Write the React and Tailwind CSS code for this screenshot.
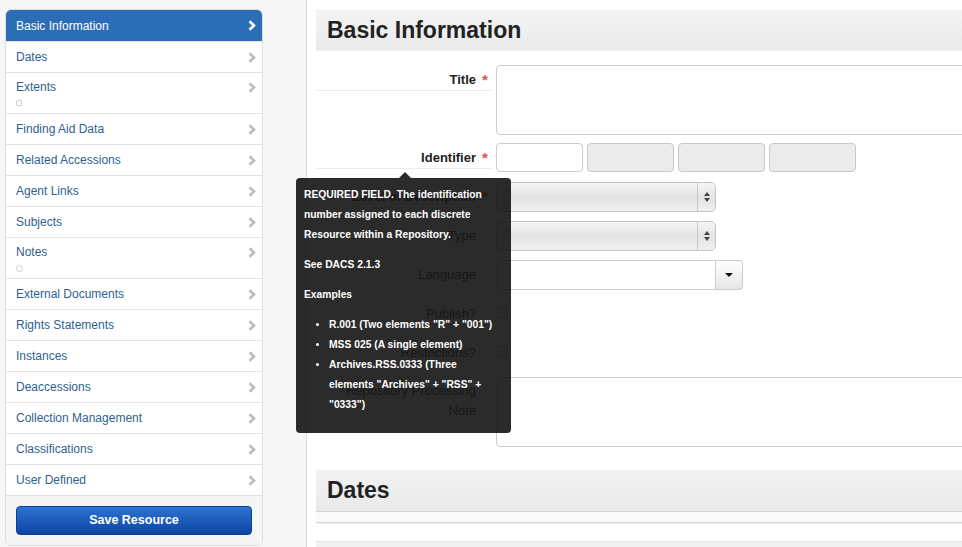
import React from "react";

const items = [
  { label: "Basic Information", active: true },
  { label: "Dates" },
  { label: "Extents", icon: "square" },
  { label: "Finding Aid Data" },
  { label: "Related Accessions" },
  { label: "Agent Links" },
  { label: "Subjects" },
  { label: "Notes", icon: "circle" },
  { label: "External Documents" },
  { label: "Rights Statements" },
  { label: "Instances" },
  { label: "Deaccessions" },
  { label: "Collection Management" },
  { label: "Classifications" },
  { label: "User Defined" },
];

function Chevron({ color }) {
  return (
    <svg width="8" height="11" viewBox="0 0 8 11" className="shrink-0">
      <path d="M1.5 1.2 L6 5.5 L1.5 9.8" fill="none" stroke={color} strokeWidth="2.6" strokeLinejoin="miter" />
    </svg>
  );
}

function Label({ text, required, bold }) {
  return (
    <div className="w-[176px] shrink-0 flex items-start border-b border-[#ececec] h-fit pt-[5px] pb-0">
      <div
        className={
          "w-[160px] text-right text-[13px] leading-[20px] " +
          (bold ? "font-bold text-[#222]" : "font-normal text-[#333]")
        }
      >
        {text}
      </div>
      {required && (
        <span className="ml-[6px] text-[#d9534f] text-[15px] leading-[20px] font-bold">*</span>
      )}
    </div>
  );
}

function SelectBox() {
  return (
    <div className="ml-[4px] w-[220px] h-[30px] rounded-[5px] border border-[#c4c4c4] bg-gradient-to-b from-[#f6f6f6] via-[#e3e3e3] to-[#f0f0f0] flex justify-end">
      <div className="w-[18px] border-l border-[#c8c8c8] flex flex-col items-center justify-center gap-[2px]">
        <span className="w-0 h-0 border-l-[3px] border-r-[3px] border-b-[4px] border-l-transparent border-r-transparent border-b-[#444]" />
        <span className="w-0 h-0 border-l-[3px] border-r-[3px] border-t-[4px] border-l-transparent border-r-transparent border-t-[#444]" />
      </div>
    </div>
  );
}

export default function App() {
  return (
    <div
      className="w-[962px] h-[547px] overflow-hidden flex bg-white"
      style={{ fontFamily: '"Liberation Sans", Arial, Helvetica, sans-serif' }}
    >
      {/* Left column */}
      <div className="w-[307px] shrink-0 bg-[#f6f6f6] border-r border-[#dcdcdc] pt-[9px] pl-[5px]">
        <div className="w-[258px] rounded-[6px] border border-[#dedede] bg-white overflow-hidden">
          {items.map((it, i) => (
            <div
              key={it.label}
              className={
                "flex justify-between pl-[10px] pr-[6px] " +
                (i > 0 ? "border-t border-[#e3e3e3] " : "") +
                (it.active ? "bg-[#2b6db7] h-[31px] items-center" : it.icon ? "h-[41px] pt-[6px] items-start" : "h-[31px] items-center")
              }
            >
              <div className="flex flex-col">
                <span
                  className={
                    "text-[12px] leading-[16px] " + (it.active ? "text-white" : "text-[#2f5f90]")
                  }
                >
                  {it.label}
                </span>
                {it.icon === "square" && (
                  <span className="mt-[5px] w-[6px] h-[6px] rounded-[1px] border border-[#d0d0d0]" />
                )}
                {it.icon === "circle" && (
                  <span className="mt-[5px] w-[7px] h-[7px] rounded-full border border-[#d0d0d0]" />
                )}
              </div>
              <div className={it.icon ? "pt-[3px]" : ""}>
                <Chevron color={it.active ? "#ffffff" : "#bcbcbc"} />
              </div>
            </div>
          ))}
          <div className="border-t border-[#e0e0e0] bg-[#f5f5f5] px-[10px] pt-[10px] pb-[10px]">
            <button className="w-full h-[29px] rounded-[4px] border border-[#0b3f96] bg-gradient-to-b from-[#2e73d3] to-[#0b45a3] text-white text-[12.5px] font-bold">
              Save Resource
            </button>
          </div>
        </div>
      </div>

      {/* Main */}
      <div className="w-[680px] shrink-0 pl-[9px] pt-[10px] relative">
        <div className="h-[41px] bg-gradient-to-b from-[#f4f4f4] to-[#e9e9e9] border-t border-[#f0f0f0] border-b border-[#d3d3d3] flex items-center pl-[11px]">
          <h2 className="text-[23px] font-bold text-[#222] leading-none">Basic Information</h2>
        </div>

        {/* Title */}
        <div className="flex mt-[14px]">
          <Label text="Title" required bold />
          <div className="ml-[4px] flex-1 h-[70px] border border-[#cccccc] rounded-[4px] bg-white" />
        </div>

        {/* Identifier */}
        <div className="flex mt-[8px]">
          <Label text="Identifier" required bold />
          <div className="ml-[4px] flex gap-[4px]">
            <div className="w-[87px] h-[29px] border border-[#cccccc] rounded-[4px] bg-white" />
            <div className="w-[87px] h-[29px] border border-[#c8c8c8] rounded-[4px] bg-[#ebebeb]" />
            <div className="w-[87px] h-[29px] border border-[#c8c8c8] rounded-[4px] bg-[#ebebeb]" />
            <div className="w-[87px] h-[29px] border border-[#c8c8c8] rounded-[4px] bg-[#ebebeb]" />
          </div>
        </div>

        {/* Level of Description */}
        <div className="flex mt-[10px]">
          <Label text="Level of Description" required bold />
          <SelectBox />
        </div>

        {/* Type */}
        <div className="flex mt-[9px]">
          <Label text="Type" />
          <SelectBox />
        </div>

        {/* Language */}
        <div className="flex mt-[9px]">
          <Label text="Language" />
          <div className="ml-[4px] flex h-[30px]">
            <div className="w-[220px] h-full border border-[#cccccc] rounded-l-[4px] bg-white" />
            <div className="w-[27px] h-full border border-l-0 border-[#cccccc] rounded-r-[4px] bg-gradient-to-b from-[#ffffff] to-[#e6e6e6] flex items-center justify-center">
              <span className="w-0 h-0 border-l-[4px] border-r-[4px] border-t-[4px] border-l-transparent border-r-transparent border-t-[#111]" />
            </div>
          </div>
        </div>

        {/* Publish */}
        <div className="flex mt-[9px] h-[29px]">
          <Label text="Publish?" />
          <div className="ml-[5px] pt-[8px]">
            <div className="w-[11px] h-[11px] border border-[#bbbbbb] rounded-[2px] bg-white" />
          </div>
        </div>

        {/* Restrictions */}
        <div className="flex mt-[10px] h-[29px]">
          <Label text="Restrictions?" />
          <div className="ml-[5px] pt-[8px]">
            <div className="w-[11px] h-[11px] border border-[#bbbbbb] rounded-[2px] bg-white" />
          </div>
        </div>

        {/* Repository Processing Note */}
        <div className="flex mt-[10px]">
          <div className="w-[176px] shrink-0 pt-[4px]">
            <div className="w-[160px] text-right text-[13px] leading-[20px] text-[#333]">
              Repository Processing Note
            </div>
          </div>
          <div className="ml-[4px] flex-1 h-[70px] border border-[#cccccc] rounded-[4px] bg-white" />
        </div>

        {/* Dates section */}
        <div className="mt-[23px] border-b border-[#d6d6d6] shadow-[0_1px_1px_rgba(0,0,0,0.06)]">
          <div className="h-[42px] bg-gradient-to-b from-[#f2f2f2] to-[#e9e9e9] border-b border-[#d3d3d3] flex items-center pl-[11px]">
            <h2 className="text-[23px] font-bold text-[#222] leading-none">Dates</h2>
          </div>
          <div className="h-[10px] bg-[#f9f9f9]" />
        </div>

        <div className="mt-[18px] h-[20px] bg-gradient-to-b from-[#f2f2f2] to-[#e9e9e9] border-t border-[#e6e6e6]" />

        {/* Tooltip */}
        <div className="absolute left-[-11px] top-[172px] w-[215px]">
          <div className="flex justify-start pl-[103px]">
            <span className="w-0 h-0 border-l-[6px] border-r-[6px] border-b-[6px] border-l-transparent border-r-transparent border-b-[rgba(20,20,20,0.9)]" />
          </div>
          <div className="bg-[rgba(20,20,20,0.9)] rounded-[4px] px-[8px] pt-[7px] pb-[18px] text-white font-bold text-[10.3px] leading-[20px]">
            <p>REQUIRED FIELD. The identification number assigned to each discrete Resource within a Repository.</p>
            <p className="mt-[10px]">See DACS 2.1.3</p>
            <p className="mt-[10px]">Examples</p>
            <ul className="mt-[10px] pl-[25px] list-disc">
              <li>R.001 (Two elements "R" + "001")</li>
              <li>MSS 025 (A single element)</li>
              <li>Archives.RSS.0333 (Three elements "Archives" + "RSS" + "0333")</li>
            </ul>
          </div>
        </div>
      </div>
    </div>
  );
}
